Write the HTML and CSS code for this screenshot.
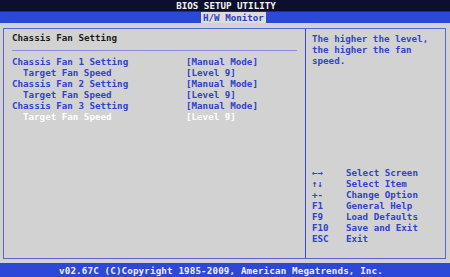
FILE: index.html
```html
<!DOCTYPE html>
<html lang="en">
<head>
    <meta charset="UTF-8">
    <title>BIOS Setup Utility</title>
    <link rel="stylesheet" href="styles.css">
</head>
<body>
    <div class="screen">
        <header class="title-bar">BIOS SETUP UTILITY</header>
        <nav class="tab-bar">
            <span class="tab active">H/W Monitor</span>
        </nav>
        <main class="main">
            <div class="frame">
                <section class="settings">
                    <h1 class="heading">Chassis Fan Setting</h1>
                    <ul class="rows">
                        <li><span class="label">Chassis Fan 1 Setting</span><span class="value">[Manual Mode]</span></li>
                        <li class="sub"><span class="label">Target Fan Speed</span><span class="value">[Level 9]</span></li>
                        <li><span class="label">Chassis Fan 2 Setting</span><span class="value">[Manual Mode]</span></li>
                        <li class="sub"><span class="label">Target Fan Speed</span><span class="value">[Level 9]</span></li>
                        <li><span class="label">Chassis Fan 3 Setting</span><span class="value">[Manual Mode]</span></li>
                        <li class="sub selected"><span class="label">Target Fan Speed</span><span class="value">[Level 9]</span></li>
                    </ul>
                </section>
                <aside class="help">
                    <p class="help-text">The higher the level,<br>the higher the fan<br>speed.</p>
                    <ul class="keys">
                        <li><span class="key">&larr;&rarr;</span><span>Select Screen</span></li>
                        <li><span class="key">&uarr;&darr;</span><span>Select Item</span></li>
                        <li><span class="key">+-</span><span>Change Option</span></li>
                        <li><span class="key">F1</span><span>General Help</span></li>
                        <li><span class="key">F9</span><span>Load Defaults</span></li>
                        <li><span class="key">F10</span><span>Save and Exit</span></li>
                        <li><span class="key">ESC</span><span>Exit</span></li>
                    </ul>
                </aside>
            </div>
        </main>
        <footer class="status-bar">v02.67C (C)Copyright 1985-2009, American Megatrends, Inc.</footer>
    </div>
</body>
</html>
```

FILE: styles.css
```css
html, body {
    margin: 0;
    padding: 0;
    background-color: #d2d2d2;
}
.screen {
    width: 450px;
    height: 277px;
    display: flex;
    flex-direction: column;
    font-family: "DejaVu Sans Mono", "Liberation Mono", monospace;
    font-size: 9.2px;
    font-weight: bold;
    line-height: 11px;
    overflow: hidden;
}
.title-bar {
    height: 11px;
    background-color: #0c0f2e;
    color: #f4f4f4;
    text-align: center;
    padding-left: 2px;
}
.tab-bar {
    height: 11px;
    background-color: #2b48d6;
    border-top: 1px solid #1b2c96;
    display: flex;
    padding-left: 201px;
}
.tab {
    padding: 0 2px;
}
.tab.active {
    background-color: #dcdcdc;
    color: #2c3ec4;
}
.main {
    flex: 1;
    background-color: #d2d2d2;
    padding: 5px 4px 4px 3px;
    display: flex;
}
.frame {
    flex: 1;
    border: 1px solid #5a66d2;
    display: grid;
    grid-template-columns: 302px 1fr;
}
.settings {
    border-right: 1px solid #3a48c8;
    padding: 3px 8px 0 8px;
}
.heading {
    margin: 0;
    font-size: 9.2px;
    font-weight: bold;
    color: #1a1a1a;
    padding-bottom: 7px;
    border-bottom: 1px solid #8890dc;
}
.rows {
    list-style: none;
    margin: 5px 0 0;
    padding: 0;
}
.rows li {
    display: flex;
    color: #3142cc;
}
.rows .label {
    width: 174px;
}
.rows .sub .label {
    padding-left: 11px;
    width: 163px;
}
.rows .selected {
    color: #ffffff;
}
.help {
    display: flex;
    flex-direction: column;
    padding: 4px 6px 14px 6px;
    color: #3142cc;
}
.help-text {
    margin: 0;
}
.keys {
    list-style: none;
    margin: auto 0 0;
    padding: 0;
}
.keys li {
    display: flex;
}
.keys .key {
    width: 34px;
}
.status-bar {
    height: 14px;
    line-height: 15px;
    background-color: #2b48d6;
    color: #f0f0f0;
    text-align: center;
    letter-spacing: 0.15px;
    padding-right: 8px;
}
```
